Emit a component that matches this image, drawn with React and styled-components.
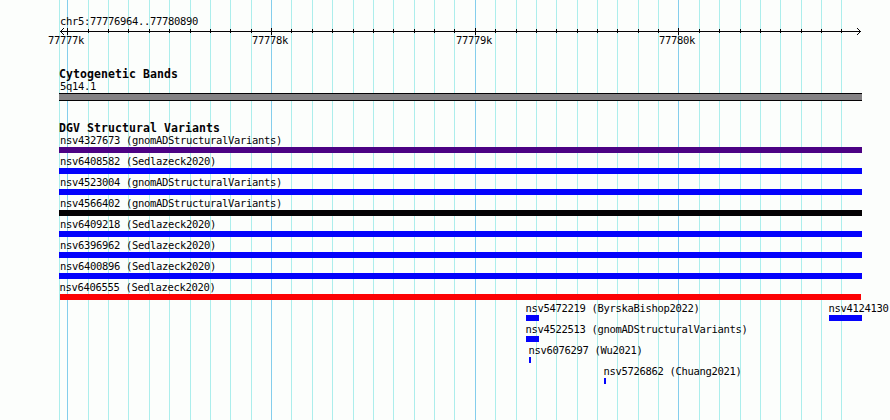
import React from "react";
import styled, { createGlobalStyle } from "styled-components";

const GlobalStyle = createGlobalStyle`
  body { margin: 0; background: #fcfefc; }
`;

const LEFT = 59;
const MAJOR = [67, 271, 475, 678];
const MINOR = [
  59, 88, 108, 128, 149, 169, 190, 210, 230, 251, 291, 312, 332, 353, 373, 393,
  414, 434, 454, 495, 516, 536, 556, 577, 597, 617, 638, 658, 699, 719, 740,
  760, 780, 801, 821, 841,
];

const Browser = styled.main`
  position: relative;
  width: 890px;
  height: 420px;
  overflow: hidden;
  background: #fcfefc;
  color: #040204;
  font-family: "DejaVu Sans Mono", "Liberation Mono", monospace;
`;

const Gridlines = styled.svg`
  position: absolute;
  inset: 0;
`;

const Tracks = styled.div`
  position: relative;
  display: flex;
  flex-direction: column;
  padding-top: 15px;
`;

const Label = styled.div`
  height: 13px;
  line-height: 13px;
  font-size: 10.5px;
  letter-spacing: -0.321px;
  white-space: pre;
  padding-left: 1px;
`;

const Region = styled(Label)`
  margin-left: ${LEFT}px;
`;

const Ruler = styled.svg`
  display: block;
`;

const ScaleRow = styled.div`
  display: grid;
  grid-template-columns: 204px 204px 203px 204px;
  padding-left: 47px;
  height: 12px;
  margin-top: -1px;
`;

const Track = styled.section`
  display: flex;
  flex-direction: column;
  padding-top: ${(p) => p.$gap}px;
`;

const Heading = styled.h2`
  margin: 0 0 0 ${LEFT}px;
  height: 12px;
  line-height: 13px;
  font-size: 11.5px;
  font-weight: bold;
  letter-spacing: 0.077px;
  white-space: pre;
`;

const Band = styled.div`
  box-sizing: border-box;
  width: 803px;
  height: 8px;
  margin-left: ${LEFT}px;
  background: #848284;
  border: solid #040204;
  border-width: 1px 0;
`;

const VariantRow = styled.div`
  display: flex;
  height: 21px;
`;

const Variant = styled.div`
  flex: none;
  width: ${(p) => p.$width}px;
  margin-left: ${(p) => p.$offset}px;
`;

const Bar = styled.div`
  width: ${(p) => p.$width}px;
  height: 6px;
  background: ${(p) => p.$color};
`;

const BLUE = "#0402fc";

const rows = [
  [{ name: "nsv4327673 (gnomADStructuralVariants)", color: "#4c0284" }],
  [{ name: "nsv6408582 (Sedlazeck2020)" }],
  [{ name: "nsv4523004 (gnomADStructuralVariants)" }],
  [{ name: "nsv4566402 (gnomADStructuralVariants)", color: "#040204" }],
  [{ name: "nsv6409218 (Sedlazeck2020)" }],
  [{ name: "nsv6396962 (Sedlazeck2020)" }],
  [{ name: "nsv6400896 (Sedlazeck2020)" }],
  [{ name: "nsv6406555 (Sedlazeck2020)", color: "#fc0204", x: 60, width: 801, pad: 0 }],
  [
    { name: "nsv5472219 (ByrskaBishop2022)", x: 526, width: 13, pad: 0, slot: 303 },
    { name: "nsv4124130", x: 829, width: 33, pad: 0 },
  ],
  [{ name: "nsv4522513 (gnomADStructuralVariants)", x: 526, width: 13, pad: 0 }],
  [{ name: "nsv6076297 (Wu2021)", x: 529, width: 2, pad: 0 }],
  [{ name: "nsv5726862 (Chuang2021)", x: 604, width: 2, pad: 0 }],
];

const VariantLabel = styled(Label)`
  padding-left: ${(p) => p.$pad}px;
  ${(p) => (p.$pad ? "" : "text-indent: -0.5px;")}
`;

function Feature({ item, offset }) {
  const { name, color = BLUE, width = 803, pad = 1, slot } = item;
  return (
    <Variant $width={slot || width} $offset={offset}>
      <VariantLabel $pad={pad}>{name}</VariantLabel>
      <Bar $width={width} $color={color} />
    </Variant>
  );
}

export default function App() {
  return (
    <Browser>
      <GlobalStyle />
      <Gridlines width="890" height="420" shapeRendering="crispEdges">
        {MINOR.map((x) => (
          <rect key={x} x={x} y="0" width="1" height="420" fill="#aceeec" />
        ))}
        {MAJOR.map((x) => (
          <rect key={x} x={x} y="0" width="1" height="420" fill="#84ceec" />
        ))}
      </Gridlines>
      <Tracks>
        <Region>chr5:77776964..77780890</Region>
        <Ruler width="890" height="7" shapeRendering="crispEdges" fill="#040204">
          <rect x="60" y="3" width="801" height="1" />
          {[1, 2, 3].map((d) => (
            <React.Fragment key={d}>
              <rect x={60 + d} y={3 - d} width="1" height="1" />
              <rect x={60 + d} y={3 + d} width="1" height="1" />
              <rect x={860 - d} y={3 - d} width="1" height="1" />
              <rect x={860 - d} y={3 + d} width="1" height="1" />
            </React.Fragment>
          ))}
          {MINOR.slice(1).map((x) => (
            <rect key={x} x={x} y="1" width="1" height="4" />
          ))}
          {MAJOR.map((x) => (
            <rect key={x} x={x} y="0" width="1" height="7" />
          ))}
        </Ruler>
        <ScaleRow>
          <Label>77777k</Label>
          <Label>77778k</Label>
          <Label>77779k</Label>
          <Label>77780k</Label>
        </ScaleRow>
        <Track $gap={22}>
          <Heading>Cytogenetic Bands</Heading>
          <Region>5q14.1</Region>
          <Band />
        </Track>
        <Track $gap={21}>
          <Heading>DGV Structural Variants</Heading>
          {rows.map((items, i) => {
            let cursor = 0;
            return (
              <VariantRow key={i}>
                {items.map((item) => {
                  const x = item.x || LEFT;
                  const offset = x - cursor;
                  cursor = x + (item.slot || item.width || 803);
                  return <Feature key={item.name} item={item} offset={offset} />;
                })}
              </VariantRow>
            );
          })}
        </Track>
      </Tracks>
    </Browser>
  );
}
